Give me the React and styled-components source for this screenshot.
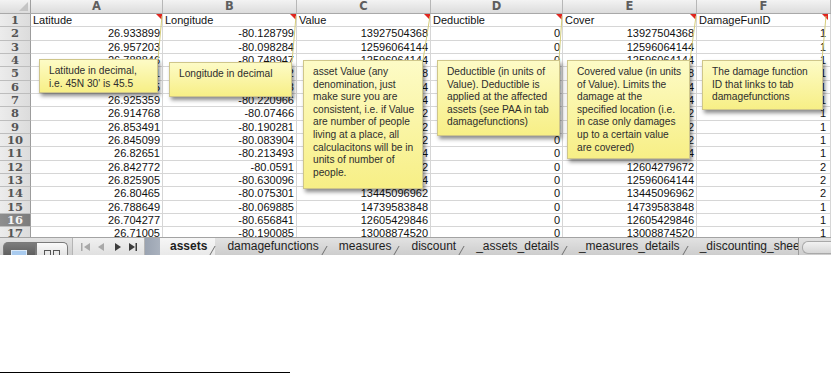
import React from 'react';
import styled, { createGlobalStyle, css } from 'styled-components';

const GlobalStyle = createGlobalStyle`
  html, body {
    margin: 0;
    padding: 0;
    background: #fff;
  }
  body {
    font-family: "Liberation Sans", Arial, sans-serif;
  }
`;

const COLS = '31px 132px 134px 134px 132px 134px 134px';
const ROW_H = 13.333;

const headers = ['Latitude', 'Longitude', 'Value', 'Deductible', 'Cover', 'DamageFunID'];

const rows = [
  ['26.933899', '-80.128799', '13927504368', '0', '13927504368', '1'],
  ['26.957203', '-80.098284', '12596064144', '0', '12596064144', '1'],
  ['26.788846', '-80.748947', '12596064144', '0', '12596064144', '1'],
  ['26.918221', '-80.115632', '13927504368', '0', '13927504368', '1'],
  ['26.933115', '-80.102418', '12596064144', '0', '12596064144', '1'],
  ['26.925359', '-80.220966', '12596064144', '0', '12596064144', '1'],
  ['26.914768', '-80.07466', '13445096962', '0', '13445096962', '1'],
  ['26.853491', '-80.190281', '12604279672', '0', '12604279672', '1'],
  ['26.845099', '-80.083904', '12604279672', '0', '12604279672', '1'],
  ['26.82651', '-80.213493', '12596064144', '0', '12596064144', '1'],
  ['26.842772', '-80.0591', '12604279672', '0', '12604279672', '2'],
  ['26.825905', '-80.630096', '12596064144', '0', '12596064144', '2'],
  ['26.80465', '-80.075301', '13445096962', '0', '13445096962', '2'],
  ['26.788649', '-80.069885', '14739583848', '0', '14739583848', '1'],
  ['26.704277', '-80.656841', '12605429846', '0', '12605429846', '1'],
  ['26.71005', '-80.190085', '13008874520', '0', '13008874520', '1'],
];

const comments = [
  { x: 39, y: 59, w: 119, h: 34, lines: ['Latitude in decimal,', "i.e. 45N 30' is 45.5"] },
  { x: 169, y: 62, w: 123, h: 35, lines: ['Longitude in decimal'] },
  {
    x: 303, y: 60, w: 120, h: 129,
    lines: ['asset Value (any', 'denomination, just', 'make sure you are', 'consistent, i.e. if Value',
      'are number of people', 'living at a place, all', 'calculacitons will be in', 'units of number of', 'people.'],
  },
  {
    x: 437, y: 60, w: 123, h: 76,
    lines: ['Deductible (in units of', 'Value). Deductible is', 'applied at the affected', 'assets (see PAA in tab', 'damagefunctions)'],
  },
  {
    x: 567, y: 60, w: 123, h: 99,
    lines: ['Covered value (in units', 'of Value). Limits the', 'damage at the', 'specified location (i.e.',
      'in case only damages', 'up to a certain value', 'are covered)'],
  },
  { x: 702, y: 60, w: 121, h: 50, lines: ['The damage function', 'ID that links to tab', 'damagefunctions'] },
];

const leaders = [
  [162, 16, 158, 59],
  [296, 16, 292, 62],
  [430, 16, 423, 60],
  [562, 16, 559, 60],
  [696, 16, 690, 60],
  [826, 16, 822, 60],
];

const tabs = ['assets', 'damagefunctions', 'measures', 'discount', '_assets_details', '_measures_details', '_discounting_sheet'];

const Sheet = styled.div`
  position: relative;
  width: 831px;
  height: 255px;
  overflow: hidden;
  background: #fff;
`;

const Grid = styled.div`
  height: 237px;
  overflow: hidden;
`;

const HeaderRow = styled.div`
  display: grid;
  grid-template-columns: ${COLS};
  height: 14px;
  background: linear-gradient(#f3f3f3, #dcdcdc);
  border-bottom: 1px solid #a9a9a9;
  box-sizing: border-box;
`;

const Corner = styled.div`
  position: relative;
  border-right: 1px solid #a0a0a0;
  &:after {
    content: '';
    position: absolute;
    right: 2px;
    bottom: 2px;
    border-style: solid;
    border-width: 0 0 9px 9px;
    border-color: transparent transparent #c4c4c4 transparent;
  }
`;

const ColLetter = styled.div`
  border-right: 1px solid #b7b7b7;
  font: bold 11.5px "DejaVu Sans", sans-serif;
  color: #5e5e5e;
  text-align: center;
  line-height: 13px;
`;

const Row = styled.div`
  display: grid;
  grid-template-columns: ${COLS};
  height: ${ROW_H}px;
`;

const RowLabel = styled.div`
  background: ${(p) => (p.$selected ? 'linear-gradient(90deg, #8e8e8e, #7c7c7c)' : 'linear-gradient(90deg, #ececec, #dcdcdc)')};
  color: ${(p) => (p.$selected ? '#f4f4f4' : '#555')};
  border-right: 1px solid #9c9c9c;
  border-bottom: 1px solid #bdbdbd;
  box-sizing: border-box;
  font: bold 11.5px "DejaVu Serif", serif;
  text-align: center;
  line-height: 13px;
  overflow: hidden;
`;

const Cell = styled.div`
  position: relative;
  border-right: 1px solid #d6d6d6;
  border-bottom: 1px solid #d6d6d6;
  box-sizing: border-box;
  padding: 0 ${(p) => (p.$last ? 4 : 2)}px 0 2px;
  font-size: 11px;
  line-height: 12px;
  color: #111;
  white-space: nowrap;
  overflow: hidden;
  text-align: ${(p) => (p.$num ? 'right' : 'left')};
  ${(p) =>
    p.$flag &&
    css`
      &:after {
        content: '';
        position: absolute;
        top: 0;
        right: ${p.$last ? 2 : 0}px;
        border-style: solid;
        border-width: 0 6px 6px 0;
        border-color: transparent #e0261f transparent transparent;
      }
    `}
`;

const Leaders = styled.svg`
  position: absolute;
  left: 0;
  top: 0;
  pointer-events: none;
`;

const Note = styled.div`
  position: absolute;
  box-sizing: border-box;
  padding: 5px 0 0 9px;
  background: linear-gradient(#fdfbc6, #f7ef86);
  border: 1px solid #cfc68a;
  box-shadow: 2px 3px 4px rgba(0, 0, 0, 0.45);
  font-size: 10.2px;
  line-height: 12.6px;
  color: #2e2e2e;
`;

const NoteLine = styled.span`
  display: block;
  white-space: nowrap;
`;

const TabBar = styled.div`
  display: flex;
  height: 18px;
  background: linear-gradient(#e2e2e2, #cdcdcd);
  border-top: 1px solid #a3a3a3;
  box-sizing: border-box;
  overflow: hidden;
`;

const ViewButtons = styled.div`
  display: flex;
  margin: 4px 0 0 3px;
  width: 65px;
`;

const ViewButton = styled.div`
  flex: 1;
  display: flex;
  justify-content: center;
  padding-top: 7px;
  border: 1px solid #7a7a7a;
  border-bottom: none;
  background: ${(p) => (p.$on ? 'linear-gradient(#7c7c7c, #5f5f5f)' : 'linear-gradient(#fafafa, #e4e4e4)')};
  border-radius: ${(p) => (p.$on ? '5px 0 0 0' : '0 5px 0 0')};
`;

const NavBox = styled.div`
  margin-left: 4px;
  width: 73px;
  display: flex;
  align-items: center;
  justify-content: center;
  background: linear-gradient(#f0f0f0, #e0e0e0);
  border-left: 1px solid #b5b5b5;
  border-right: 1px solid #b5b5b5;
  box-sizing: border-box;
`;

const Splitter = styled.div`
  width: 15px;
  background: linear-gradient(90deg, #9aa3b1, #aab2be);
`;

const TabStrip = styled.div`
  flex: 1;
  display: flex;
  overflow: hidden;
`;

const Tab = styled.div`
  position: relative;
  padding: 0 8px 0 ${(p) => (p.$active ? 10 : 12)}px;
  font-size: 12px;
  line-height: 17px;
  white-space: nowrap;
  color: #1e1e1e;
  font-weight: ${(p) => (p.$active ? 'bold' : 'normal')};
  background: ${(p) => (p.$active ? 'linear-gradient(#f6f6f6, #e9e9e9)' : 'transparent')};
  &:after {
    content: '';
    position: absolute;
    right: 2px;
    bottom: 0;
    width: 1px;
    height: 9px;
    background: #6f6f6f;
    transform: skewX(-30deg);
  }
`;

const ScrollArea = styled.div`
  width: 29px;
  border-left: 1px solid #9a9a9a;
  padding: 3px 0 0 3px;
`;

const ScrollThumb = styled.div`
  height: 11px;
  border: 1px solid #a9a9a9;
  border-right: none;
  border-radius: 6px 0 0 6px;
  background: linear-gradient(#f2f2f2, #d6d6d6);
`;

const Footnote = styled.div`
  width: 290px;
  height: 1px;
  margin-top: 117px;
  background: #000;
`;

function GridIcon({ light }) {
  return (
    <svg width="16" height="8" viewBox="0 0 16 8">
      {light ? (
        <rect x="0.5" y="0.5" width="15" height="7" fill="#a9cbef" stroke="#dbe9f7" />
      ) : (
        <g fill="none" stroke="#555">
          <rect x="0.5" y="0.5" width="6" height="7" />
          <rect x="9.5" y="0.5" width="6" height="7" />
        </g>
      )}
    </svg>
  );
}

function NavArrows() {
  return (
    <svg width="58" height="10" viewBox="0 0 58 10">
      <rect x="1" y="1" width="1.5" height="8" fill="#a8a8a8" />
      <polygon points="10,1 10,9 4,5" fill="#a8a8a8" />
      <polygon points="24,1 24,9 18,5" fill="#a8a8a8" />
      <polygon points="35,1 35,9 41,5" fill="#3c3c3c" />
      <polygon points="49,1 49,9 55,5" fill="#3c3c3c" />
      <rect x="55.5" y="1" width="1.5" height="8" fill="#3c3c3c" />
    </svg>
  );
}

function Comments() {
  return (
    <>
      <Leaders width="831" height="237">
        {leaders.map(([x1, y1, x2, y2], i) => (
          <line key={i} x1={x1} y1={y1} x2={x2} y2={y2} stroke="#d6cd7a" strokeWidth="1" />
        ))}
      </Leaders>
      {comments.map((c, i) => (
        <Note key={i} style={{ left: c.x, top: c.y, width: c.w, height: c.h }}>
          {c.lines.map((l, j) => (
            <NoteLine key={j}>{l}</NoteLine>
          ))}
        </Note>
      ))}
    </>
  );
}

export default function App() {
  return (
    <>
      <GlobalStyle />
      <Sheet>
        <Grid>
          <HeaderRow>
            <Corner />
            {['A', 'B', 'C', 'D', 'E', 'F'].map((l) => (
              <ColLetter key={l}>{l}</ColLetter>
            ))}
          </HeaderRow>
          <Row>
            <RowLabel>1</RowLabel>
            {headers.map((h, j) => (
              <Cell key={h} $flag $last={j === headers.length - 1}>{h}</Cell>
            ))}
          </Row>
          {rows.map((r, i) => (
            <Row key={i}>
              <RowLabel $selected={i + 2 === 16}>{i + 2}</RowLabel>
              {r.map((v, j) => (
                <Cell key={j} $num $last={j === r.length - 1}>{v}</Cell>
              ))}
            </Row>
          ))}
        </Grid>
        <Comments />
        <TabBar>
          <ViewButtons>
            <ViewButton $on>
              <GridIcon light />
            </ViewButton>
            <ViewButton>
              <GridIcon />
            </ViewButton>
          </ViewButtons>
          <NavBox>
            <NavArrows />
          </NavBox>
          <Splitter />
          <TabStrip>
            {tabs.map((t, i) => (
              <Tab key={t} $active={i === 0}>{t}</Tab>
            ))}
          </TabStrip>
          <ScrollArea>
            <ScrollThumb />
          </ScrollArea>
        </TabBar>
      </Sheet>
      <Footnote />
    </>
  );
}
